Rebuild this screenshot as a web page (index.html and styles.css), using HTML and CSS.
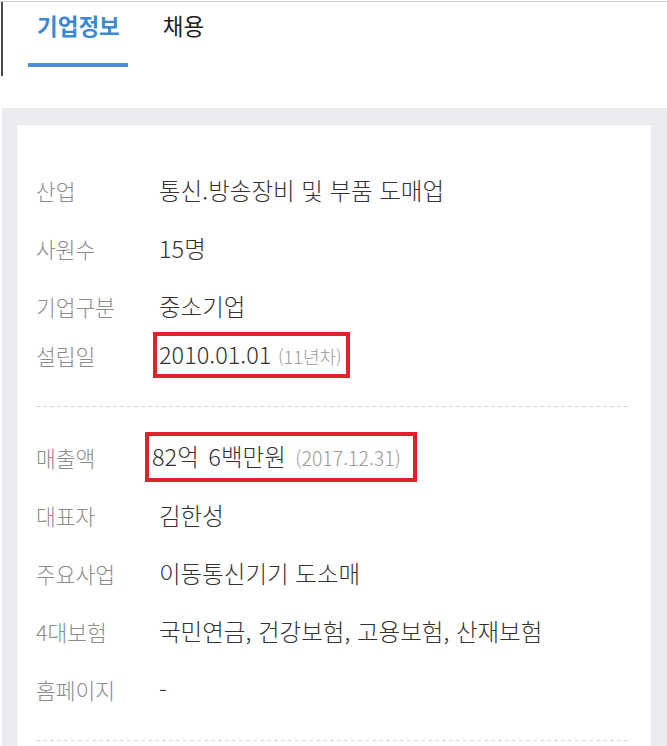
FILE: index.html
```html
<!DOCTYPE html>
<html lang="ko">
<head>
<meta charset="utf-8">
<title>기업정보</title>
<link rel="stylesheet" href="styles.css">
</head>
<body>
<header class="top">
  <nav class="tabs">
    <a class="tab tab-active">기업정보</a>
    <a class="tab">채용</a>
  </nav>
</header>
<main class="area">
  <section class="card">
    <div class="group">
      <div class="row"><span class="label">산업</span><span class="value">통신.방송장비 및 부품 도매업</span></div>
      <div class="row"><span class="label">사원수</span><span class="value">15명</span></div>
      <div class="row row-tight"><span class="label">기업구분</span><span class="value">중소기업</span></div>
      <div class="row"><span class="label">설립일</span><span class="value mark mark-a">2010.01.01 <span class="sub">(11년차)</span></span></div>
    </div>
    <div class="dash"></div>
    <div class="group">
      <div class="row"><span class="label">매출액</span><span class="value mark mark-b">82억 6백만원 <span class="sub">(2017.12.31)</span></span></div>
      <div class="row"><span class="label">대표자</span><span class="value">김한성</span></div>
      <div class="row"><span class="label">주요사업</span><span class="value">이동통신기기 도소매</span></div>
      <div class="row"><span class="label">4대보험</span><span class="value">국민연금, 건강보험, 고용보험, 산재보험</span></div>
      <div class="row"><span class="label">홈페이지</span><span class="value">-</span></div>
    </div>
    <div class="dash"></div>
  </section>
</main>
</body>
</html>
```
FILE: styles.css
```css
html, body {
  margin: 0;
  padding: 0;
  background: #ffffff;
}
body {
  font-family: "Noto Sans CJK KR", "Noto Sans", sans-serif;
  padding-top: 1px;
  height: 745px;
  overflow: hidden;
}
.top {
  border-top: 1px solid #cfcfcf;
  height: 106px;
}
.tabs {
  display: flex;
  margin-left: 1px;
  border-left: 2px solid #4a4a4a;
  height: 74px;
  padding-left: 25px;
  gap: 26px;
}
.tab {
  display: block;
  font-size: 22.5px;
  line-height: 30px;
  padding: 8px 8px 23px 9px;
  height: 30px;
  color: #222;
  font-weight: 400;
  border-bottom: 4px solid transparent;
}
.tab-active {
  color: #3b89d4;
  font-weight: 700;
  border-bottom-color: #4a8fd8;
}
.area {
  background: #ebecf0;
  margin-left: 2px;
  padding: 17px 16px 0 15px;
  height: 621px;
}
.card {
  box-sizing: border-box;
  background: #ffffff;
  padding: 48px 21px 0 19px;
  height: 621px;
  box-shadow: 0 0 0 1px #e6e7ea;
}
.group {
  display: flex;
  flex-direction: column;
  gap: 24px;
}
.row {
  display: flex;
  align-items: center;
  height: 34px;
  font-size: 23.5px;
}
.row-tight {
  margin-bottom: -9px;
}
.group + .dash {
  margin-top: 34px;
}
.dash + .group {
  margin-top: 33px;
}
.label {
  width: 123px;
  flex: none;
  color: #8c8c8c;
  font-size: 21.5px;
  font-weight: 300;
}
.value {
  color: #333333;
  font-weight: 300;
  white-space: nowrap;
}
.sub {
  font-size: 18px;
  color: #9a9a9a;
}
.mark {
  border: 4px solid #e0222c;
  line-height: 34px;
}
.mark-a {
  padding: 1px 4px 1px 2px;
  margin-left: -6px;
}
.mark-b {
  padding: 3px 12px 3px 3px;
  margin-left: -14px;
  word-spacing: 3px;
}
.mark-b .sub {
  font-size: 19.5px;
}
.dash {
  height: 1px;
  background: repeating-linear-gradient(to right, #d6d6d6 0 4px, transparent 4px 7px);
}
```
